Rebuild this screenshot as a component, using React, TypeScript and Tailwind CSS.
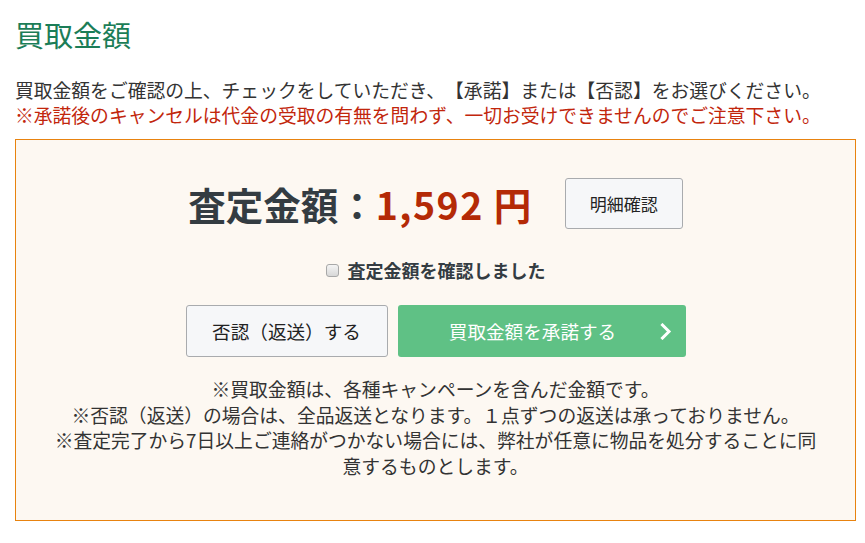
import React from "react";

const font = { fontFamily: '"Noto Sans CJK JP", "Noto Sans", sans-serif' };

const App = () => {
  return (
    <div
      className="min-h-[543px] w-[865px] bg-white pt-[14px] pl-[15px] text-[#333] [text-spacing-trim:space-all]"
      style={font}
    >
      <h1 className="text-[29px] leading-[40px] text-[#1b7d57]">買取金額</h1>

      <div className="mt-[23px] text-[18.8px] leading-[25px] whitespace-nowrap">
        <p>
          買取金額をご確認の上、チェックをしていただき、【承諾】または【否認】をお選びください。
        </p>
        <p className="text-[#c2260c]">
          ※承諾後のキャンセルは代金の受取の有無を問わず、一切お受けできませんのでご注意下さい。
        </p>
      </div>

      <div className="mt-[12px] w-[841px] border border-[#e8830f] bg-[#fdf8f2] pt-[38px] pb-[41px]">
        <div className="flex items-center justify-center gap-[32px]">
          <div className="text-[37.5px] font-bold leading-[51px] whitespace-nowrap">
            <span className="text-[#343c42]">査定金額：</span>
            <span className="tracking-[1.5px] text-[#b42a06]">1,592 円</span>
          </div>
          <button className="h-[51px] w-[118px] rounded-[3px] border border-[#a9abae] bg-[#f6f7f9] text-[17px] text-[#222]">
            明細確認
          </button>
        </div>

        <label className="mt-[29px] flex h-[24px] items-center justify-center gap-[9px]">
          <span className="h-[13px] w-[13px] rounded-[3px] border border-[#a8a8a8] bg-gradient-to-b from-[#f4f4f4] to-[#d8d8d8]" />
          <span className="text-[18px] font-bold text-[#343c42]">
            査定金額を確認しました
          </span>
        </label>

        <div className="mt-[23px] flex justify-center gap-[10px]">
          <button className="h-[52px] w-[202px] rounded-[3px] border border-[#a9abae] bg-[#f6f7f9] text-[18.6px] text-[#222]">
            否認（返送）する
          </button>
          <button className="relative flex h-[52px] w-[288px] items-center justify-center rounded-[3px] bg-[#5fc185] pr-[18px] text-[18.6px] text-white">
            買取金額を承諾する
            <svg
              className="absolute right-[14px] top-[18px]"
              width="12"
              height="17"
              viewBox="0 0 12 17"
              fill="none"
            >
              <path
                d="M2.5 2 L9 8.5 L2.5 15"
                stroke="white"
                strokeWidth="3"
                strokeLinecap="square"
              />
            </svg>
          </button>
        </div>

        <div className="mx-auto mt-[19px] w-[772px] text-center text-[18.8px] leading-[25.7px] text-[#333]">
          <p>※買取金額は、各種キャンペーンを含んだ金額です。</p>
          <p>
            ※否認（返送）の場合は、全品返送となります。１点ずつの返送は承っておりません。
          </p>
          <p>
            ※査定完了から7日以上ご連絡がつかない場合には、弊社が任意に物品を処分することに同意するものとします。
          </p>
        </div>
      </div>
    </div>
  );
};

export default App;
